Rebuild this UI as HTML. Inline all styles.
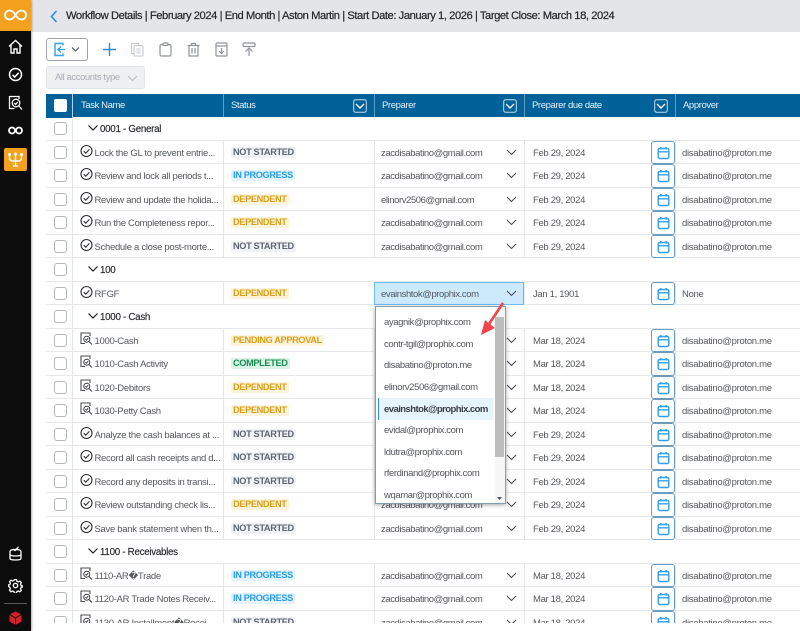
<!DOCTYPE html>
<html><head><meta charset="utf-8"><style>
*{box-sizing:border-box}
html,body{margin:0;padding:0;width:800px;height:631px;overflow:hidden;background:#fff;font-family:"Liberation Sans",sans-serif}
#main{position:absolute;left:0;top:0;width:800px;height:623px;overflow:hidden}
.r{position:absolute;left:46px;width:754px;height:23.5px;border-bottom:1px solid #e6e8ec;font-size:9.5px;color:#55585e;line-height:23px;white-space:nowrap}
.r>*{position:absolute}
.w{left:27px;top:0;width:727px;height:22.5px;background:#fff}
.cb{left:8px;top:5px;width:13px;height:13px;border:1px solid #b4b7c0;border-radius:3px;background:#fff}
.ti{left:34px;top:3px;width:13px;height:14px}
.tn{left:48.500px;top:1px;letter-spacing:-.3px}
.g{left:54px;top:1px;font-size:9.800px;color:#26282d;letter-spacing:-.3px;-webkit-text-stroke:.15px #26282d}
.gc{left:42px;top:8px;width:10px;height:6px}
.st{left:185px;top:6px;height:11px;line-height:11px;font-size:9.200px;font-weight:bold;padding:0 2px;border-radius:2px;letter-spacing:-.35px}
.ns{background:#f1f2f5;color:#5f6672}
.ip{background:#e3f3fd;color:#2b9ce9}
.de{background:#fdf3d8;color:#d8a01a}
.co{background:#d9f3e4;color:#1d8a55}
.pr{left:335px;top:1px;letter-spacing:-.42px}
.ch{left:460px;top:8px;width:11px;height:7px}
.dt{left:487px;top:1px;letter-spacing:-.33px}
.cal{left:605px;top:0;width:24px;height:23.5px;border:1px solid #6b9cc0;border-radius:3px;background:#fff}
.cal svg{position:absolute;left:5px;top:4px;width:13px;height:14px}
.ap{left:636px;top:1px;letter-spacing:-.3px}
.v{position:absolute;top:118px;bottom:0;width:1px;background:#e4e6ee}
.o{position:absolute;left:8px;letter-spacing:-.4px}
</style></head><body>
<svg width="0" height="0" style="position:absolute"><defs>
<symbol id="ck" viewBox="0 0 13 14"><circle cx="6.500" cy="7" r="5.500" fill="none" stroke="#2b2d33" stroke-width="1.100"/><path d="M3.800 7.200l2 2 3.500-3.800" fill="none" stroke="#2b2d33" stroke-width="1.100"/></symbol>
<symbol id="rv" viewBox="0 0 13 14"><path d="M5 11.500H1V1h9v3" fill="none" stroke="#4a4d55" stroke-width="1.100"/><circle cx="6.800" cy="7.200" r="3" fill="none" stroke="#3a3c44" stroke-width="1"/><path d="M5.400 7.200l1 1 1.800-2M9 9.500l3 3" fill="none" stroke="#3a3c44" stroke-width="1"/></symbol>
<symbol id="cl" viewBox="0 0 13 14"><rect x="1.200" y="2.500" width="10.600" height="10" rx="1.500" fill="none" stroke="#2f9fee" stroke-width="1.400"/><path d="M1.200 5.800h10.600M3.800 1v2.500M9.200 1v2.500" fill="none" stroke="#2f9fee" stroke-width="1.400"/></symbol>
<symbol id="dn" viewBox="0 0 11 7"><path d="M1 1l4.500 4.500L10 1" fill="none" stroke="#4a4f5c" stroke-width="1.100"/></symbol>
<symbol id="gd" viewBox="0 0 10 6"><path d="M.5.500l4.500 4.500L9.500.500" fill="none" stroke="#1f2126" stroke-width="1.200"/></symbol>
<symbol id="hf" viewBox="0 0 14 14"><rect x=".7" y=".7" width="12.600" height="12.600" rx="2" fill="none" stroke="#c6dcec" stroke-width="1"/><path d="M3 5l4 4 4-4" fill="none" stroke="#fff" stroke-width="1.400"/></symbol>
</defs></svg>

<div id="main">
<div style="position:absolute;left:31px;top:0;width:769px;height:32px;background:#e4e5e8"></div>
<svg style="position:absolute;left:50px;top:10px" width="8" height="13" viewBox="0 0 8 13"><path d="M6.500 1L1.500 6.500l5 5.500" fill="none" stroke="#2a8de0" stroke-width="1.600"/></svg>
<div style="position:absolute;left:66px;top:9px;font-size:11.200px;line-height:15px;color:#25272c;white-space:nowrap;letter-spacing:-.44px;-webkit-text-stroke:.2px #25272c">Workflow Details | February 2024 | End Month | Aston Martin | Start Date: January 1, 2026 | Target Close: March 18, 2024</div>

<!-- toolbar -->
<div style="position:absolute;left:46px;top:38px;width:42px;height:23px;border:1px solid #9ea3ab;border-radius:3px;background:#fff"></div>
<svg style="position:absolute;left:53px;top:42px" width="32" height="15" viewBox="0 0 32 15"><path d="M10 3.500V1.500H2v12h8v-2" fill="none" stroke="#2f9fee" stroke-width="1.400"/><path d="M12 7.500H5.500M8 4.500l-3 3 3 3" fill="none" stroke="#2f9fee" stroke-width="1.300"/><path d="M19 5.500l3.500 3.500L26 5.500" fill="none" stroke="#4a4f5c" stroke-width="1.100"/></svg>
<svg style="position:absolute;left:103px;top:42px" width="14" height="15" viewBox="0 0 14 15"><path d="M6.500 1v13M0 7.500h13" stroke="#2b8fdc" stroke-width="1.400" fill="none"/></svg>
<svg style="position:absolute;left:130px;top:42px" width="15" height="15" viewBox="0 0 15 15" fill="none" stroke="#c3c7cc" stroke-width="1.100"><path d="M3.500 11.500h-2v-10h7v2"/><rect x="4" y="3.500" width="9" height="10.500" rx="1"/><path d="M6.500 7h4M6.500 9h4M6.500 11h4"/></svg>
<svg style="position:absolute;left:159px;top:42px" width="13" height="15" viewBox="0 0 13 15" fill="none" stroke="#8f949b" stroke-width="1.200"><rect x="1" y="2.500" width="11" height="11.500" rx="1.500"/><rect x="4" y="1" width="5" height="2.500" rx="1" fill="#fff"/></svg>
<svg style="position:absolute;left:187px;top:42px" width="13" height="15" viewBox="0 0 13 15" fill="none" stroke="#8f949b" stroke-width="1.200"><path d="M.5 3.500h12M4.500 3.500V1.500h4v2M2 3.500V14h9V3.500M5 6v5.500M8 6v5.500"/></svg>
<svg style="position:absolute;left:215px;top:42px" width="13" height="15" viewBox="0 0 13 15" fill="none" stroke="#8f949b" stroke-width="1.200"><rect x="1" y="1" width="11" height="13" rx="1"/><path d="M1 4h11M6.500 6v5.500M4 9l2.500 2.500L9 9"/></svg>
<svg style="position:absolute;left:242px;top:42px" width="14" height="15" viewBox="0 0 14 15" fill="none" stroke="#8f949b" stroke-width="1.200"><rect x="1" y="1" width="12" height="3.500" rx="1"/><path d="M7 14V6.500M3.500 9.500L7 6l3.500 3.500"/></svg>

<div style="position:absolute;left:46px;top:66px;width:99px;height:23px;background:#eef0f2;border:1px solid #e3e5e8;border-radius:3px;font-size:9.500px;line-height:22px;color:#a9adb4;padding-left:8px;white-space:nowrap;letter-spacing:-.42px">All accounts type</div>
<svg style="position:absolute;left:127px;top:75px" width="11" height="7" viewBox="0 0 11 7"><path d="M1 1l4.500 4.500L10 1" fill="none" stroke="#b9bdc4" stroke-width="1.100"/></svg>

<!-- table header -->
<div style="position:absolute;left:46px;top:94px;width:754px;height:24px;background:#006298;color:#e6f0f6;font-size:9.500px;line-height:24px;white-space:nowrap;letter-spacing:-.4px">
<div style="position:absolute;left:8px;top:5px;width:13px;height:13px;background:#fff;border-radius:2px"></div>
<div style="position:absolute;left:26px;top:0;width:1px;height:24px;background:#b6cfe0"></div>
<span style="position:absolute;left:35px;top:0">Task Name</span>
<div style="position:absolute;left:177px;top:0;width:1px;height:24px;background:#5f9dc4"></div>
<span style="position:absolute;left:185px;top:0">Status</span>
<svg style="position:absolute;left:307px;top:5px" width="14" height="14"><use href="#hf"/></svg>
<div style="position:absolute;left:328px;top:0;width:1px;height:24px;background:#5f9dc4"></div>
<span style="position:absolute;left:336px;top:0">Preparer</span>
<svg style="position:absolute;left:457px;top:5px" width="14" height="14"><use href="#hf"/></svg>
<div style="position:absolute;left:478px;top:0;width:1px;height:24px;background:#5f9dc4"></div>
<span style="position:absolute;left:486px;top:0">Preparer due date</span>
<svg style="position:absolute;left:608px;top:5px" width="14" height="14"><use href="#hf"/></svg>
<div style="position:absolute;left:629px;top:0;width:1px;height:24px;background:#5f9dc4"></div>
<span style="position:absolute;left:637px;top:0">Approver</span>
</div>

<div class="v" style="left:72px"></div>
<div class="v" style="left:223px"></div>
<div class="v" style="left:374px"></div>
<div class="v" style="left:524px"></div>
<div class="v" style="left:675px"></div>

<!-- rows -->
<div class="r" style="top:117.250px"><i class="w"></i><i class="cb"></i><svg class="gc"><use href="#gd"/></svg><span class="g">0001 - General</span></div>
<div class="r" style="top:140.750px"><i class="cb"></i><svg class="ti"><use href="#ck"/></svg><span class="tn">Lock the GL to prevent entrie...</span><b class="st ns">NOT STARTED</b><span class="pr">zacdisabatino@gmail.com</span><svg class="ch"><use href="#dn"/></svg><span class="dt">Feb 29, 2024</span><span class="cal"><svg><use href="#cl"/></svg></span><span class="ap">disabatino@proton.me</span></div>
<div class="r" style="top:164.250px"><i class="cb"></i><svg class="ti"><use href="#ck"/></svg><span class="tn">Review and lock all periods t...</span><b class="st ip">IN PROGRESS</b><span class="pr">zacdisabatino@gmail.com</span><svg class="ch"><use href="#dn"/></svg><span class="dt">Feb 29, 2024</span><span class="cal"><svg><use href="#cl"/></svg></span><span class="ap">disabatino@proton.me</span></div>
<div class="r" style="top:187.750px"><i class="cb"></i><svg class="ti"><use href="#ck"/></svg><span class="tn">Review and update the holida...</span><b class="st de">DEPENDENT</b><span class="pr">elinorv2506@gmail.com</span><svg class="ch"><use href="#dn"/></svg><span class="dt">Feb 29, 2024</span><span class="cal"><svg><use href="#cl"/></svg></span><span class="ap">disabatino@proton.me</span></div>
<div class="r" style="top:211.250px"><i class="cb"></i><svg class="ti"><use href="#ck"/></svg><span class="tn">Run the Completeness repor...</span><b class="st de">DEPENDENT</b><span class="pr">zacdisabatino@gmail.com</span><svg class="ch"><use href="#dn"/></svg><span class="dt">Feb 29, 2024</span><span class="cal"><svg><use href="#cl"/></svg></span><span class="ap">disabatino@proton.me</span></div>
<div class="r" style="top:234.750px"><i class="cb"></i><svg class="ti"><use href="#ck"/></svg><span class="tn">Schedule a close post-morte...</span><b class="st ns">NOT STARTED</b><span class="pr">zacdisabatino@gmail.com</span><svg class="ch"><use href="#dn"/></svg><span class="dt">Feb 29, 2024</span><span class="cal"><svg><use href="#cl"/></svg></span><span class="ap">disabatino@proton.me</span></div>
<div class="r" style="top:258.250px"><i class="w"></i><i class="cb"></i><svg class="gc"><use href="#gd"/></svg><span class="g">100</span></div>
<div class="r" style="top:281.750px"><i class="cb"></i><svg class="ti"><use href="#ck"/></svg><span class="tn">RFGF</span><b class="st de">DEPENDENT</b><span style="left:328px;top:0;width:150px;height:23px;background:#cdeafc;border:1px solid #6fbdf0"></span><span class="pr">evainshtok@prophix.com</span><svg class="ch"><use href="#dn"/></svg><span class="dt">Jan 1, 1901</span><span class="cal"><svg><use href="#cl"/></svg></span><span class="ap">None</span></div>
<div class="r" style="top:305.250px"><i class="w"></i><i class="cb"></i><svg class="gc"><use href="#gd"/></svg><span class="g">1000 - Cash</span></div>
<div class="r" style="top:328.750px"><i class="cb"></i><svg class="ti"><use href="#rv"/></svg><span class="tn">1000-Cash</span><b class="st de">PENDING APPROVAL</b><span class="pr">zacdisabatino@gmail.com</span><svg class="ch"><use href="#dn"/></svg><span class="dt">Mar 18, 2024</span><span class="cal"><svg><use href="#cl"/></svg></span><span class="ap">disabatino@proton.me</span></div>
<div class="r" style="top:352.250px"><i class="cb"></i><svg class="ti"><use href="#rv"/></svg><span class="tn">1010-Cash Activity</span><b class="st co">COMPLETED</b><span class="pr">zacdisabatino@gmail.com</span><svg class="ch"><use href="#dn"/></svg><span class="dt">Mar 18, 2024</span><span class="cal"><svg><use href="#cl"/></svg></span><span class="ap">disabatino@proton.me</span></div>
<div class="r" style="top:375.750px"><i class="cb"></i><svg class="ti"><use href="#rv"/></svg><span class="tn">1020-Debitors</span><b class="st de">DEPENDENT</b><span class="pr">zacdisabatino@gmail.com</span><svg class="ch"><use href="#dn"/></svg><span class="dt">Mar 18, 2024</span><span class="cal"><svg><use href="#cl"/></svg></span><span class="ap">disabatino@proton.me</span></div>
<div class="r" style="top:399.250px"><i class="cb"></i><svg class="ti"><use href="#rv"/></svg><span class="tn">1030-Petty Cash</span><b class="st de">DEPENDENT</b><span class="pr">zacdisabatino@gmail.com</span><svg class="ch"><use href="#dn"/></svg><span class="dt">Mar 18, 2024</span><span class="cal"><svg><use href="#cl"/></svg></span><span class="ap">disabatino@proton.me</span></div>
<div class="r" style="top:422.750px"><i class="cb"></i><svg class="ti"><use href="#ck"/></svg><span class="tn">Analyze the cash balances at ...</span><b class="st ns">NOT STARTED</b><span class="pr">zacdisabatino@gmail.com</span><svg class="ch"><use href="#dn"/></svg><span class="dt">Feb 29, 2024</span><span class="cal"><svg><use href="#cl"/></svg></span><span class="ap">disabatino@proton.me</span></div>
<div class="r" style="top:446.250px"><i class="cb"></i><svg class="ti"><use href="#ck"/></svg><span class="tn">Record all cash receipts and d...</span><b class="st ns">NOT STARTED</b><span class="pr">zacdisabatino@gmail.com</span><svg class="ch"><use href="#dn"/></svg><span class="dt">Feb 29, 2024</span><span class="cal"><svg><use href="#cl"/></svg></span><span class="ap">disabatino@proton.me</span></div>
<div class="r" style="top:469.750px"><i class="cb"></i><svg class="ti"><use href="#ck"/></svg><span class="tn">Record any deposits in transi...</span><b class="st ns">NOT STARTED</b><span class="pr">zacdisabatino@gmail.com</span><svg class="ch"><use href="#dn"/></svg><span class="dt">Feb 29, 2024</span><span class="cal"><svg><use href="#cl"/></svg></span><span class="ap">disabatino@proton.me</span></div>
<div class="r" style="top:493.250px"><i class="cb"></i><svg class="ti"><use href="#ck"/></svg><span class="tn">Review outstanding check lis...</span><b class="st de">DEPENDENT</b><span class="pr">zacdisabatino@gmail.com</span><svg class="ch"><use href="#dn"/></svg><span class="dt">Feb 29, 2024</span><span class="cal"><svg><use href="#cl"/></svg></span><span class="ap">disabatino@proton.me</span></div>
<div class="r" style="top:516.750px"><i class="cb"></i><svg class="ti"><use href="#ck"/></svg><span class="tn">Save bank statement when th...</span><b class="st ns">NOT STARTED</b><span class="pr">zacdisabatino@gmail.com</span><svg class="ch"><use href="#dn"/></svg><span class="dt">Feb 29, 2024</span><span class="cal"><svg><use href="#cl"/></svg></span><span class="ap">disabatino@proton.me</span></div>
<div class="r" style="top:540.250px"><i class="w"></i><i class="cb"></i><svg class="gc"><use href="#gd"/></svg><span class="g">1100 - Receivables</span></div>
<div class="r" style="top:563.750px"><i class="cb"></i><svg class="ti"><use href="#rv"/></svg><span class="tn">1110-AR�Trade</span><b class="st ip">IN PROGRESS</b><span class="pr">zacdisabatino@gmail.com</span><svg class="ch"><use href="#dn"/></svg><span class="dt">Mar 18, 2024</span><span class="cal"><svg><use href="#cl"/></svg></span><span class="ap">disabatino@proton.me</span></div>
<div class="r" style="top:587.250px"><i class="cb"></i><svg class="ti"><use href="#rv"/></svg><span class="tn">1120-AR Trade Notes Receiv...</span><b class="st ip">IN PROGRESS</b><span class="pr">zacdisabatino@gmail.com</span><svg class="ch"><use href="#dn"/></svg><span class="dt">Mar 18, 2024</span><span class="cal"><svg><use href="#cl"/></svg></span><span class="ap">disabatino@proton.me</span></div>
<div class="r" style="top:610.750px"><i class="cb"></i><svg class="ti"><use href="#rv"/></svg><span class="tn">1130-AR Installment�Recei</span><b class="st ns">NOT STARTED</b><span class="pr">zacdisabatino@gmail.com</span><svg class="ch"><use href="#dn"/></svg><span class="dt">Mar 18, 2024</span><span class="cal"><svg><use href="#cl"/></svg></span><span class="ap">disabatino@proton.me</span></div>

<!-- dropdown -->
<div style="position:absolute;left:375px;top:306px;width:131px;height:198px;background:#fff;border:1px solid #7fa0b4;box-shadow:0 1px 4px rgba(0,0,0,.35);font-size:9.500px;color:#53565d;white-space:nowrap;overflow:hidden">
<div style="position:absolute;left:2px;top:91px;width:115px;height:22px;background:#e6f4fd;border-left:1px solid #2a8de0"></div>
<span class="o" style="top:10px">ayagnik@prophix.com</span>
<span class="o" style="top:32px">contr-tgil@prophix.com</span>
<span class="o" style="top:53px">disabatino@proton.me</span>
<span class="o" style="top:75px">elinorv2506@gmail.com</span>
<span class="o" style="top:97px;font-weight:bold;color:#3a3d44;letter-spacing:-.55px">evainshtok@prophix.com</span>
<span class="o" style="top:118px">evidal@prophix.com</span>
<span class="o" style="top:140px">ldutra@prophix.com</span>
<span class="o" style="top:161px">rferdinand@prophix.com</span>
<span class="o" style="top:183px">wqamar@prophix.com</span>
<div style="position:absolute;left:119px;top:0;width:10px;height:196px;background:#f6f6f6"></div>
<div style="position:absolute;left:119px;top:10px;width:9px;height:140px;background:#bdbdbd"></div>
<svg style="position:absolute;left:121px;top:190px" width="5" height="4"><path d="M0 0h5L2.500 3z" fill="#555"/></svg>
</div>
<!-- red arrow -->
<svg style="position:absolute;left:476px;top:300px" width="30" height="38" viewBox="0 0 30 38"><path d="M27 3L13 24" stroke="#f0444a" stroke-width="2.600" fill="none"/><path d="M5 35L9 20l10 8z" fill="#f0444a"/></svg>
</div>

<!-- sidebar -->
<div style="position:absolute;left:0;top:0;width:31px;height:631px;background:#0c0c0c;box-shadow:1px 0 2px rgba(0,0,0,.3)"></div>
<div style="position:absolute;left:0;top:0;width:31px;height:31px;background:#f3a11e"></div>
<svg style="position:absolute;left:4px;top:8px" width="23" height="14" viewBox="0 0 23 14" fill="none" stroke="#fff" stroke-width="1.800"><path d="M11.500 7C9.500 3.500 7.500 2.500 5.500 2.500a4.500 4.500 0 000 9c2 0 4-1 6-4.500zm0 0c2-3.500 4-4.500 6-4.500a4.500 4.500 0 010 9c-2 0-4-1-6-4.500z"/></svg>
<svg style="position:absolute;left:8px;top:39px" width="15" height="15" viewBox="0 0 15 15" fill="none" stroke="#fff" stroke-width="1.400"><path d="M1 7.500L7.500 1.500 14 7.500M3 6v8h3v-4h3v4h3V6"/></svg>
<svg style="position:absolute;left:8px;top:67px" width="15" height="15" viewBox="0 0 15 15" fill="none" stroke="#fff" stroke-width="1.500"><circle cx="7.500" cy="7.500" r="6"/><path d="M4.500 7.800l2.200 2.200 4-4.200"/></svg>
<svg style="position:absolute;left:8px;top:95px" width="15" height="16" viewBox="0 0 15 16" fill="none" stroke="#fff" stroke-width="1.300"><path d="M11 4V1.500H1.500v12h5"/><circle cx="8" cy="8" r="3.800"/><path d="M6.200 8l1.400 1.400 2.200-2.400M11 11l3 3.500"/></svg>
<svg style="position:absolute;left:8px;top:126px" width="15" height="9" viewBox="0 0 15 9" fill="none" stroke="#fff" stroke-width="1.800"><circle cx="4" cy="4.500" r="3"/><circle cx="11" cy="4.500" r="3"/></svg>
<div style="position:absolute;left:4px;top:148px;width:23px;height:23px;background:#f3a11e;border-radius:2px"></div>
<svg style="position:absolute;left:8px;top:152px" width="15" height="15" viewBox="0 0 15 15" fill="none" stroke="#fff" stroke-width="1.400"><path d="M7.500 3v11M1.500 3v3a3 3 0 003 3h6a3 3 0 003-3V3M5 14h5"/><circle cx="1.500" cy="2.500" r=".8"/><circle cx="7.500" cy="2" r=".8"/><circle cx="13.500" cy="2.500" r=".8"/></svg>
<svg style="position:absolute;left:9px;top:546px" width="13" height="15" viewBox="0 0 13 15" fill="none" stroke="#fff" stroke-width="1.300"><path d="M1 5.500c0-1.500 2.500-2 5.500-2s5.500.5 5.500 2v7c0 1-2 1.500-5.500 1.500S1 13.500 1 12.500zM1 8.500c0 1 2.500 1.500 5.500 1.500s5.500-.5 5.500-1.500M4 3l2 1.500L9.500 1"/></svg>
<svg style="position:absolute;left:8px;top:578px" width="15" height="15" viewBox="0 0 15 15" fill="none" stroke="#fff" stroke-width="1.400"><circle cx="7.500" cy="7.500" r="2.200"/><path d="M6.300 1h2.400l.4 1.900 1.700.7 1.600-1 1.700 1.700-1 1.600.7 1.700 1.900.4v1.200l-1.900.4-.7 1.700 1 1.600-1.700 1.700-1.600-1-1.700.7-.4 1.900H6.300l-.4-1.900-1.700-.7-1.600 1-1.700-1.700 1-1.600-.7-1.700L-.7 8V7l1.900-.4.7-1.700-1-1.600 1.700-1.700 1.600 1 1.700-.7z" transform="translate(.7 .7) scale(.9)"/></svg>
<div style="position:absolute;left:4px;top:603px;width:23px;height:1px;background:#555"></div>
<svg style="position:absolute;left:9px;top:611px" width="13" height="14" viewBox="0 0 13 14"><path d="M6.500 .5l6 3v7l-6 3.500-6-3.500v-7z" fill="#d42028"/><path d="M.5 3.500l6 3.500 6-3.500M6.500 7v7" stroke="#0c0c0c" stroke-width=".8" fill="none"/></svg>
</body></html>
